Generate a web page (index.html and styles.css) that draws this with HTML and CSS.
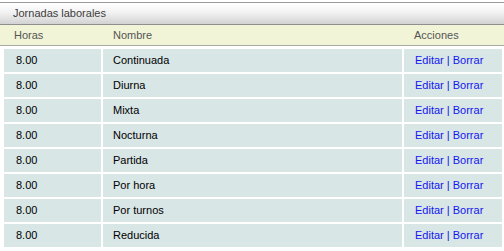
FILE: index.html
```html
<!DOCTYPE html>
<html lang="es">
<head>
<meta charset="utf-8">
<title>Jornadas laborales</title>
<link rel="stylesheet" href="styles.css">
</head>
<body>
<div class="panel">
  <div class="panel-title">Jornadas laborales</div>
  <div class="head-row">
    <div class="hc c1">Horas</div>
    <div class="hc c2">Nombre</div>
    <div class="hc c3">Acciones</div>
  </div>
  <table class="grid">
    <tbody>
      <tr><td class="c1">8.00</td><td class="c2">Continuada</td><td class="c3"><a href="#">Editar</a> | <a href="#">Borrar</a></td></tr>
      <tr><td class="c1">8.00</td><td class="c2">Diurna</td><td class="c3"><a href="#">Editar</a> | <a href="#">Borrar</a></td></tr>
      <tr><td class="c1">8.00</td><td class="c2">Mixta</td><td class="c3"><a href="#">Editar</a> | <a href="#">Borrar</a></td></tr>
      <tr><td class="c1">8.00</td><td class="c2">Nocturna</td><td class="c3"><a href="#">Editar</a> | <a href="#">Borrar</a></td></tr>
      <tr><td class="c1">8.00</td><td class="c2">Partida</td><td class="c3"><a href="#">Editar</a> | <a href="#">Borrar</a></td></tr>
      <tr><td class="c1">8.00</td><td class="c2">Por hora</td><td class="c3"><a href="#">Editar</a> | <a href="#">Borrar</a></td></tr>
      <tr><td class="c1">8.00</td><td class="c2">Por turnos</td><td class="c3"><a href="#">Editar</a> | <a href="#">Borrar</a></td></tr>
      <tr><td class="c1">8.00</td><td class="c2">Reducida</td><td class="c3"><a href="#">Editar</a> | <a href="#">Borrar</a></td></tr>
    </tbody>
  </table>
</div>
</body>
</html>
```
FILE: styles.css
```css
html, body {
  margin: 0;
  padding: 0;
  background: #fff;
}
body {
  padding-top: 2px;
  font-family: "Liberation Sans", Arial, sans-serif;
  font-size: 11px;
  color: #000;
}
.panel {
  border-top: 1px solid #9a9a9a;
}
.panel-title {
  height: 21px;
  line-height: 21px;
  padding-left: 13px;
  color: #3c3c3c;
  background: linear-gradient(to bottom, #ffffff 0%, #f2f2f2 45%, #d2d2d2 100%);
  border-bottom: 1px solid #8f8f8f;
}
.head-row {
  display: flex;
  height: 20px;
  line-height: 20px;
  background: #f1f4d7;
  border-bottom: 1px solid #a9a9a4;
  padding-left: 4px;
  color: #555;
}
.hc { box-sizing: border-box; }
.head-row .c1 { width: 99px; padding-left: 10px; }
.head-row .c2 { width: 301px; padding-left: 10px; }
.head-row .c3 { flex: 1; padding-left: 10px; }
.grid {
  border-collapse: separate;
  border-spacing: 2px;
  margin: 1px 0 0 2px;
  width: 502px;
  table-layout: fixed;
}
.grid td {
  background: #d8e6e6;
  height: 23px;
  padding: 0 0 0 10px;
  box-sizing: border-box;
  vertical-align: middle;
  white-space: nowrap;
  line-height: 23px;
}
.grid td.c1 { width: 97px; padding-left: 12px; }
.grid td.c2 { width: 299px; }
.grid td.c3 { padding-left: 11px; color: #1515f0; }
.grid a {
  color: #1515f0;
  text-decoration: none;
}
```
